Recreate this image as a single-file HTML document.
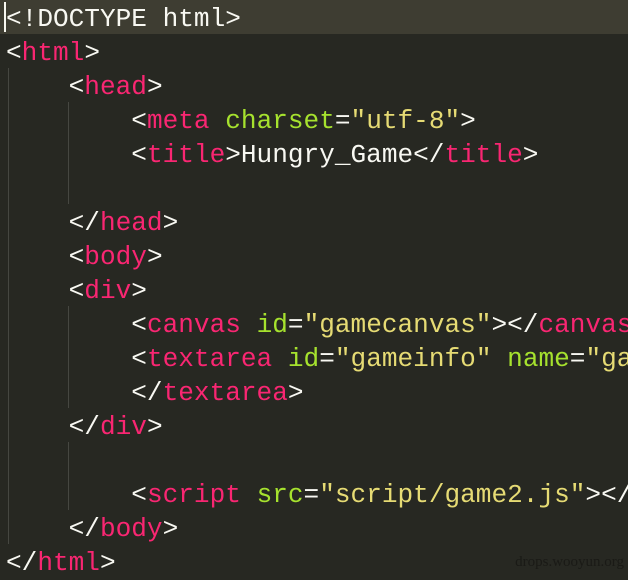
<!DOCTYPE html>
<html><head><meta charset="utf-8"><style>
body{margin:0;width:628px;height:575px;background:#272822;overflow:hidden;position:relative}
pre{margin:0;position:absolute;left:6px;top:2px;width:622px;overflow:hidden;font-family:"Liberation Mono","DejaVu Sans Mono",monospace;font-size:26.1px;line-height:34px;color:#f8f8f2;white-space:pre}
.hl{position:absolute;left:0;top:0;width:628px;height:34px;background:#3e3d32}
.caret{position:absolute;left:4px;top:2px;width:2px;height:30px;background:#f8f8f0}
.g{position:absolute;width:1px;background:#464741}
.t{color:#f92672}.a{color:#a6e22e}.s{color:#e6db74}
.w{position:absolute;right:4px;bottom:4px;font-family:"Liberation Serif",serif;font-size:15px;color:#1a1a16}
</style></head><body>
<div class="hl"></div><div class="caret"></div>
<div class="g" style="left:8px;top:68px;height:476px"></div>
<div class="g" style="left:68px;top:102px;height:102px"></div>
<div class="g" style="left:68px;top:306px;height:102px"></div>
<div class="g" style="left:68px;top:442px;height:68px"></div>
<pre>&lt;!DOCTYPE html&gt;
&lt;<span class="t">html</span>&gt;
    &lt;<span class="t">head</span>&gt;
        &lt;<span class="t">meta</span> <span class="a">charset</span>=<span class="s">"utf-8"</span>&gt;
        &lt;<span class="t">title</span>&gt;Hungry_Game&lt;/<span class="t">title</span>&gt;

    &lt;/<span class="t">head</span>&gt;
    &lt;<span class="t">body</span>&gt;
    &lt;<span class="t">div</span>&gt;
        &lt;<span class="t">canvas</span> <span class="a">id</span>=<span class="s">"gamecanvas"</span>&gt;&lt;/<span class="t">canvas</span>&gt;
        &lt;<span class="t">textarea</span> <span class="a">id</span>=<span class="s">"gameinfo"</span> <span class="a">name</span>=<span class="s">"gameinfo"</span>&gt;
        &lt;/<span class="t">textarea</span>&gt;
    &lt;/<span class="t">div</span>&gt;

        &lt;<span class="t">script</span> <span class="a">src</span>=<span class="s">"script/game2.js"</span>&gt;&lt;/<span class="t">script</span>&gt;
    &lt;/<span class="t">body</span>&gt;
&lt;/<span class="t">html</span>&gt;</pre>
<div class="w">drops.wooyun.org</div>
</body></html>
